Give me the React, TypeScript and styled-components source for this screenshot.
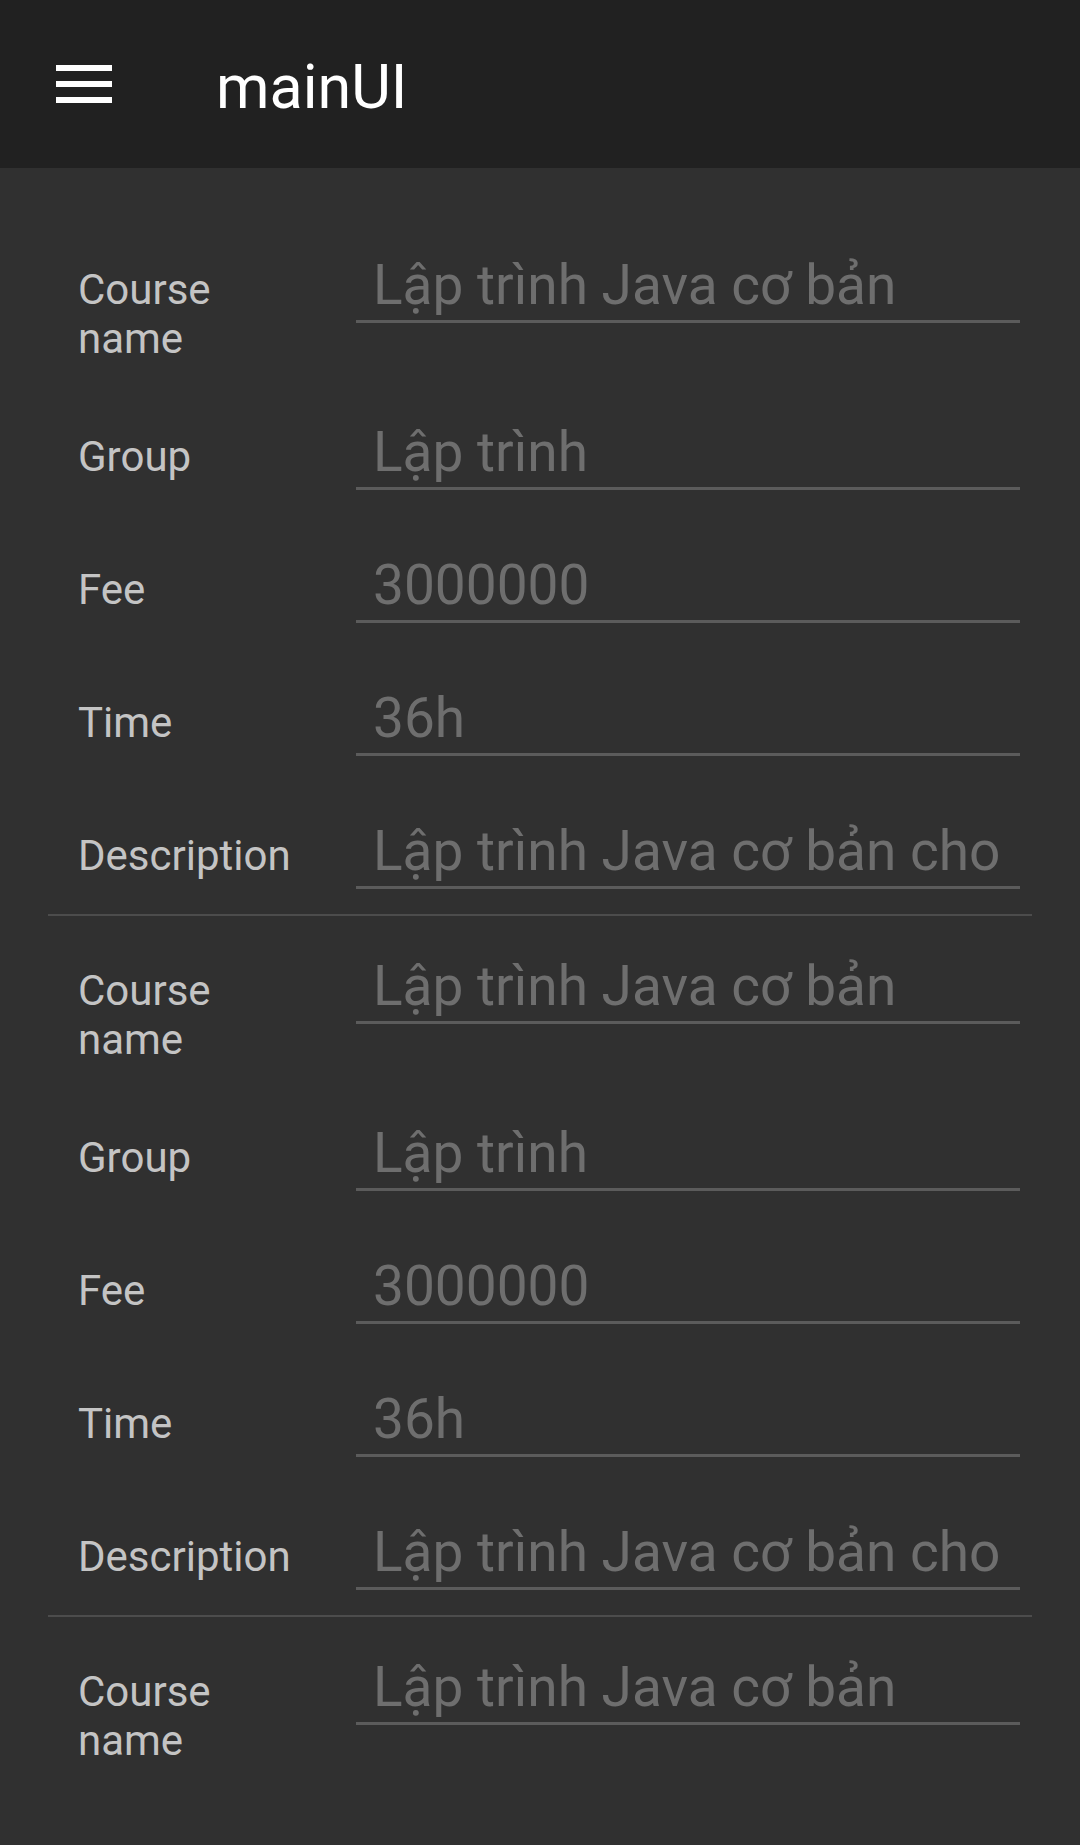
import styled, { createGlobalStyle } from "styled-components";

const GlobalStyle = createGlobalStyle`
  html, body {
    margin: 0;
    padding: 0;
    background: #303030;
  }
  body {
    font-family: Roboto, "Noto Sans", "Liberation Sans", sans-serif;
    -webkit-font-smoothing: antialiased;
  }
`;

interface Course {
  name: string;
  group: string;
  fee: string;
  time: string;
  description: string;
}

const course: Course = {
  name: "Lập trình Java cơ bản",
  group: "Lập trình",
  fee: "3000000",
  time: "36h",
  description: "Lập trình Java cơ bản cho",
};

const fieldsOf = (c: Course) => [
  { label: "Course name", value: c.name },
  { label: "Group", value: c.group },
  { label: "Fee", value: c.fee },
  { label: "Time", value: c.time },
  { label: "Description", value: c.description },
];

// two full items, then only the first row of the third fits on screen
const visible = [5, 5, 1];

const App = () => {
  return (
    <Screen>
      <GlobalStyle />

      {/* ---------- Toolbar ---------- */}
      <Toolbar>
        <MenuButton aria-label="menu">
          <span />
          <span />
          <span />
        </MenuButton>
        <ToolbarTitle>mainUI</ToolbarTitle>
      </Toolbar>

      {/* ---------- Course list ---------- */}
      <CourseList>
        {visible.map((count, i) => (
          <CourseItem key={i}>
            {fieldsOf(course)
              .slice(0, count)
              .map((f) => (
                <FieldRow key={f.label}>
                  <FieldLabel>{f.label}</FieldLabel>
                  <FieldInput>{f.value}</FieldInput>
                </FieldRow>
              ))}
            {count === 5 && <Divider />}
          </CourseItem>
        ))}
      </CourseList>
    </Screen>
  );
};

const Screen = styled.div`
  width: 1080px;
  height: 1845px;
  background: #303030;
  overflow: hidden;
`;

const Toolbar = styled.header`
  height: 168px;
  background: #212121;
  display: flex;
  align-items: center;
  padding-left: 56px;
  box-sizing: border-box;
`;

const MenuButton = styled.div`
  width: 56px;
  height: 38px;
  display: flex;
  flex-direction: column;
  justify-content: space-between;

  span {
    display: block;
    height: 6px;
    background: #ffffff;
  }
`;

const ToolbarTitle = styled.h1`
  margin: 5px 0 0 104px;
  font-size: 61px;
  line-height: 70px;
  font-weight: 400;
  color: #ffffff;
`;

const CourseList = styled.main`
  padding-top: 47px;
`;

const CourseItem = styled.section`
  display: flex;
  flex-direction: column;
`;

const FieldRow = styled.div`
  display: flex;
  align-items: baseline;
  padding: 39px 60px 19px 78px;
`;

const FieldLabel = styled.div`
  width: 230px;
  flex-shrink: 0;
  margin-right: 48px;
  font-size: 42px;
  line-height: 49px;
  color: #c4c4c4;
`;

const FieldInput = styled.div`
  flex: 1;
  min-width: 0;
  padding: 0 12px 3px 17px;
  margin-bottom: 6px;
  border-bottom: 3px solid #5b5b5b;
  font-size: 55px;
  line-height: 63px;
  color: #6e6e6e;
  white-space: nowrap;
`;

const Divider = styled.hr`
  margin: 0 48px;
  border: none;
  height: 2px;
  background: #4c4c4c;
`;

export default App;
